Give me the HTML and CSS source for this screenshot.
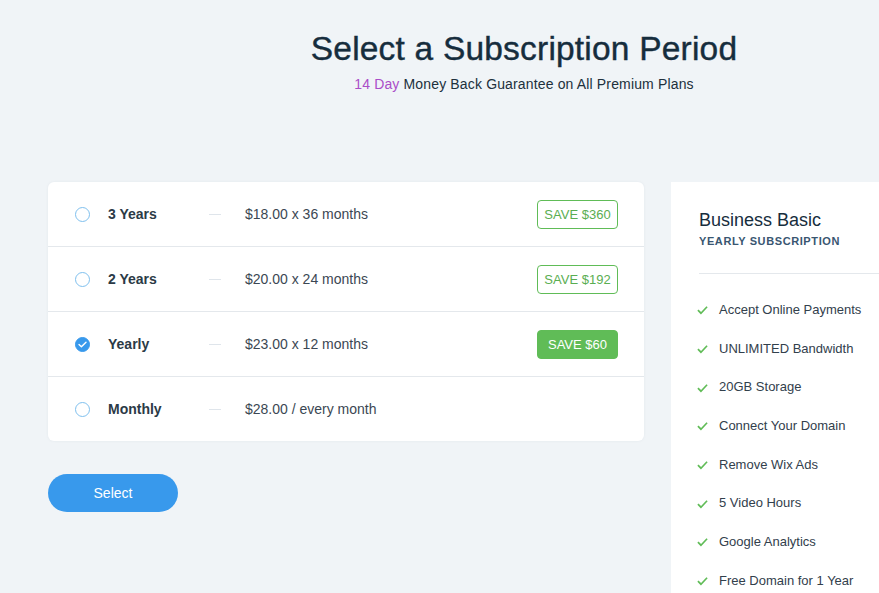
FILE: index.html
```html
<!DOCTYPE html>
<html lang="en">
<head>
    <meta charset="UTF-8">
    <title>Select a Subscription Period</title>
    <link rel="stylesheet" href="styles.css">
</head>
<body>
<div class="page">
    <div class="header">
        <h1>Select a Subscription Period</h1>
        <p class="guarantee"><span class="days">14 Day</span> Money Back Guarantee on All Premium Plans</p>
    </div>
    <div class="columns">
        <div class="left">
            <ul class="periods">
                <li class="period">
                    <span class="radio"></span>
                    <span class="name">3 Years</span>
                    <span class="dash"></span>
                    <span class="price">$18.00 x 36 months</span>
                    <span class="save">SAVE $360</span>
                </li>
                <li class="period">
                    <span class="radio"></span>
                    <span class="name">2 Years</span>
                    <span class="dash"></span>
                    <span class="price">$20.00 x 24 months</span>
                    <span class="save">SAVE $192</span>
                </li>
                <li class="period checked">
                    <span class="radio">
                        <svg width="9" height="7" viewBox="0 0 9 7"><path d="M1 3.6 L3.4 5.8 L8 1.2" fill="none" stroke="#fff" stroke-width="1.4" stroke-linecap="round" stroke-linejoin="round"/></svg>
                    </span>
                    <span class="name">Yearly</span>
                    <span class="dash"></span>
                    <span class="price">$23.00 x 12 months</span>
                    <span class="save">SAVE $60</span>
                </li>
                <li class="period">
                    <span class="radio"></span>
                    <span class="name">Monthly</span>
                    <span class="dash"></span>
                    <span class="price">$28.00 / every month</span>
                </li>
            </ul>
            <button class="select-btn">Select</button>
        </div>
        <div class="summary">
            <h3>Business Basic</h3>
            <div class="sub">YEARLY SUBSCRIPTION</div>
            <hr>
            <ul class="features">
                <li><svg class="tick" viewBox="0 0 12 10"><path d="M1 5.2 L4.3 8.5 L11 1.5" fill="none" stroke="#60bc57" stroke-width="1.8"/></svg>Accept Online Payments</li>
                <li><svg class="tick" viewBox="0 0 12 10"><path d="M1 5.2 L4.3 8.5 L11 1.5" fill="none" stroke="#60bc57" stroke-width="1.8"/></svg>UNLIMITED Bandwidth</li>
                <li><svg class="tick" viewBox="0 0 12 10"><path d="M1 5.2 L4.3 8.5 L11 1.5" fill="none" stroke="#60bc57" stroke-width="1.8"/></svg>20GB Storage</li>
                <li><svg class="tick" viewBox="0 0 12 10"><path d="M1 5.2 L4.3 8.5 L11 1.5" fill="none" stroke="#60bc57" stroke-width="1.8"/></svg>Connect Your Domain</li>
                <li><svg class="tick" viewBox="0 0 12 10"><path d="M1 5.2 L4.3 8.5 L11 1.5" fill="none" stroke="#60bc57" stroke-width="1.8"/></svg>Remove Wix Ads</li>
                <li><svg class="tick" viewBox="0 0 12 10"><path d="M1 5.2 L4.3 8.5 L11 1.5" fill="none" stroke="#60bc57" stroke-width="1.8"/></svg>5 Video Hours</li>
                <li><svg class="tick" viewBox="0 0 12 10"><path d="M1 5.2 L4.3 8.5 L11 1.5" fill="none" stroke="#60bc57" stroke-width="1.8"/></svg>Google Analytics</li>
                <li><svg class="tick" viewBox="0 0 12 10"><path d="M1 5.2 L4.3 8.5 L11 1.5" fill="none" stroke="#60bc57" stroke-width="1.8"/></svg>Free Domain for 1 Year</li>
            </ul>
        </div>
    </div>
</div>
</body>
</html>
```

FILE: styles.css
```css
*{margin: 0; padding: 0; box-sizing: border-box;}
body{
    background: #f0f4f7;
    font-family: "Liberation Sans", Arial, sans-serif;
    color: #162d3d;
    overflow: hidden;
}
ul{list-style: none;}
.page{
    width: 952px;
    margin-left: 48px;
}
.header{
    text-align: center;
    padding-top: 30px;
}
.header h1{
    font-size: 33.5px;
    font-weight: normal;
    line-height: 38px;
    letter-spacing: 0.2px;
    -webkit-text-stroke: 0.4px #162d3d;
}
.guarantee{
    font-size: 14px;
    letter-spacing: 0.15px;
    margin-top: 8px;
    color: #20303c;
}
.guarantee .days{color: #aa4dc8;}
.columns{
    display: flex;
    gap: 27px;
    margin-top: 90px;
    align-items: flex-start;
}
.left{width: 596px;}
.periods{
    background: #fff;
    border-radius: 6px;
    box-shadow: 0 0 3px rgba(22, 45, 61, 0.06);
}
.period{
    display: flex;
    align-items: center;
    height: 65px;
    padding: 0 26px 0 27px;
    border-top: 1px solid #e4e8ec;
}
.period:first-child{border-top: 0; height: 64px;}
.radio{
    width: 15px;
    height: 15px;
    border: 1px solid #7fc0ee;
    border-radius: 50%;
    display: flex;
    align-items: center;
    justify-content: center;
    flex-shrink: 0;
}
.checked .radio{
    background: #3899ec;
    border-color: #3899ec;
}
.name{
    width: 101px;
    margin-left: 18px;
    font-size: 14px;
    font-weight: bold;
    color: #2b3a46;
}
.dash{
    width: 12px;
    height: 1px;
    background: #dfe5eb;
    margin-right: 24px;
}
.price{
    font-size: 14px;
    color: #3b4753;
    flex: 1;
}
.save{
    width: 81px;
    height: 29px;
    border: 1px solid #60bc57;
    border-radius: 4px;
    color: #5aae51;
    font-size: 13px;
    display: flex;
    align-items: center;
    justify-content: center;
}
.checked .save{
    background: #60bc57;
    color: #fff;
}
.select-btn{
    margin-top: 33px;
    width: 130px;
    height: 38px;
    border: 0;
    border-radius: 19px;
    background: #3899ec;
    color: #fff;
    font-family: inherit;
    font-size: 14px;
}
.summary{
    width: 329px;
    min-height: 420px;
    background: #fff;
    padding: 28px 0 0 28px;
}
.summary h3{
    font-size: 18px;
    font-weight: normal;
    line-height: 20px;
}
.summary .sub{
    font-size: 11px;
    font-weight: bold;
    letter-spacing: 0.6px;
    color: #395671;
    margin-top: 5px;
}
.summary hr{
    border: 0;
    border-top: 1px solid #e4e8ec;
    margin-top: 26px;
}
.features{margin-top: 16px;}
.features li{
    display: flex;
    align-items: center;
    height: 38.7px;
    font-size: 13px;
    color: #32404c;
}
.tick{
    width: 11px;
    height: 10px;
    margin: 2px 11px 0 -2px;
}
```
